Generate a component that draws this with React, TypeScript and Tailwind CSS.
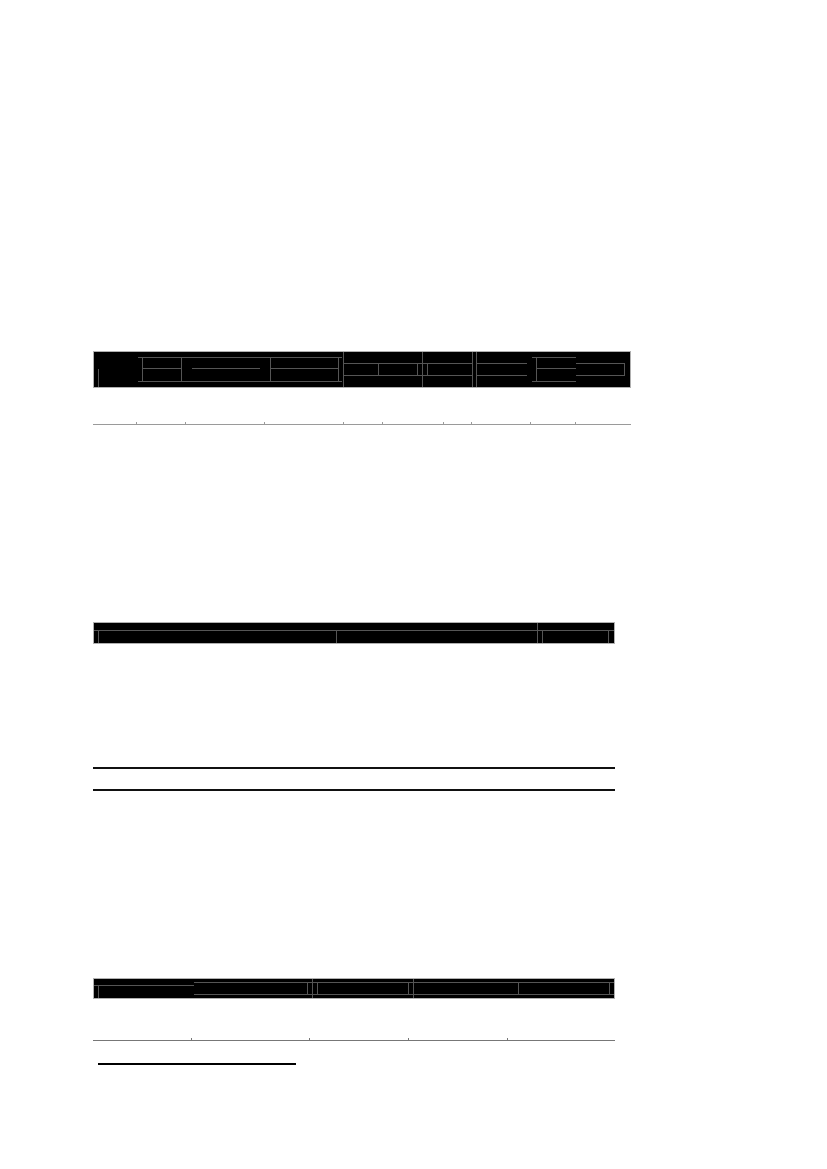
export default function App() {
  return (
    <div className="min-h-[1169px] w-[827px] bg-white pl-[93px] pt-[351px] font-['Liberation_Serif',serif] text-black">
      {/* Table 1 */}
      <div className="w-[538px]">
        <div className="flex h-[37px] border border-[#b0b0b0] bg-black">
          <div className="flex w-[43px] flex-col">
            <div className="ml-[4px] mt-[17px] flex-1 border-l border-[#555]" />
          </div>
          <div className="w-[207px] border-r border-[#555] pt-[5px]">
            <div className="ml-[1px] mr-[1px] flex h-[25px] border-y border-[#555]">
              <div className="ml-[4px] flex w-[40px] flex-col border-x border-[#555]">
                <div className="h-[11px] border-b border-[#555]" />
              </div>
              <div className="w-[88px] px-[10px]">
                <div className="h-[11px] border-b border-[#555]" />
              </div>
              <div className="flex w-[69px] flex-col border-x border-[#555]">
                <div className="h-[11px] border-b border-[#555]" />
              </div>
            </div>
          </div>
          <div className="w-[79px] border-r border-[#555] pt-[11px]">
            <div className="flex h-[13px] border-y border-[#555]">
              <div className="w-[35px] border-r border-[#555]" />
              <div className="w-[39px] border-r border-[#555]" />
            </div>
          </div>
          <div className="w-[50px] border-r border-[#555] pt-[11px]">
            <div className="flex h-[13px] border-y border-[#555]">
              <div className="w-[5px] border-r border-[#555]" />
            </div>
          </div>
          <div className="w-[4px] border-r border-[#555]" />
          <div className="w-[55px] pt-[11px] pr-[5px]">
            <div className="h-[13px] border-y border-[#555]" />
          </div>
          <div className="w-[44px] pt-[5px]">
            <div className="flex h-[25px] border-y border-[#555]">
              <div className="ml-[4px] flex flex-1 flex-col border-l border-[#555]">
                <div className="h-[11px] border-b border-[#555]" />
              </div>
            </div>
          </div>
          <div className="flex-1 pt-[11px] pr-[5px]">
            <div className="h-[13px] border-y border-r border-[#555]" />
          </div>
        </div>
        <div className="flex h-[37px] border-b border-[#9a9a9a]">
          {[44, 49, 79, 79, 39, 61, 28, 59, 45, 55].map((w, i, all) => (
            <div key={i} className="flex flex-col justify-end" style={{ width: w }}>
              {i < all.length - 1 && <div className="ml-auto h-[2px] border-r border-[#9a9a9a]" />}
            </div>
          ))}
        </div>
      </div>

      {/* Table 2 */}
      <div className="mt-[197px] w-[522px]">
        <div className="flex h-[22px] border border-[#b0b0b0] bg-black">
          <div className="flex w-[444px] flex-col border-r border-[#555]">
            <div className="h-[8px] border-b border-[#555]" />
            <div className="flex flex-1">
              <div className="ml-[4px] w-[239px] border-x border-[#555]" />
            </div>
          </div>
          <div className="flex flex-1 flex-col">
            <div className="h-[8px] border-b border-[#555]" />
            <div className="flex flex-1">
              <div className="ml-[4px] w-[67px] border-x border-[#555]" />
            </div>
          </div>
        </div>
        <div className="h-[123px]" />
        <div className="h-[24px] border-t-2 border-b-2 border-[#111]" />
      </div>

      {/* Table 3 */}
      <div className="mt-[187px] w-[522px]">
        <div className="flex h-[21px] border border-[#b0b0b0] bg-black">
          <div className="flex w-[100px] flex-col">
            <div className="h-[7px] border-b border-[#555]" />
            <div className="ml-[4px] flex-1 border-l border-[#555]" />
          </div>
          <div className="flex w-[119px] border-r border-[#555] pt-[3px]">
            <div className="flex h-[13px] flex-1 border-y border-[#555]">
              <div className="w-[114px] border-r border-[#555]" />
            </div>
          </div>
          <div className="flex w-[101px] border-r border-[#555] pt-[3px]">
            <div className="flex h-[13px] flex-1 border-y border-[#555]">
              <div className="ml-[4px] w-[92px] border-x border-[#555]" />
            </div>
          </div>
          <div className="flex flex-1 pt-[3px]">
            <div className="flex h-[13px] flex-1 border-y border-[#555]">
              <div className="w-[105px] border-r border-[#555]" />
              <div className="w-[91px] border-r border-[#555]" />
            </div>
          </div>
        </div>
        <div className="flex h-[42px] border-b border-[#777]">
          {[99, 118, 99, 99, 107].map((w, i, all) => (
            <div key={i} className="flex flex-col justify-end" style={{ width: w }}>
              {i < all.length - 1 && <div className="ml-auto h-[2px] border-r border-[#777]" />}
            </div>
          ))}
        </div>
      </div>

      <div className="ml-[5px] mt-[22px] w-[198px] border-t-2 border-black" />
    </div>
  );
}
